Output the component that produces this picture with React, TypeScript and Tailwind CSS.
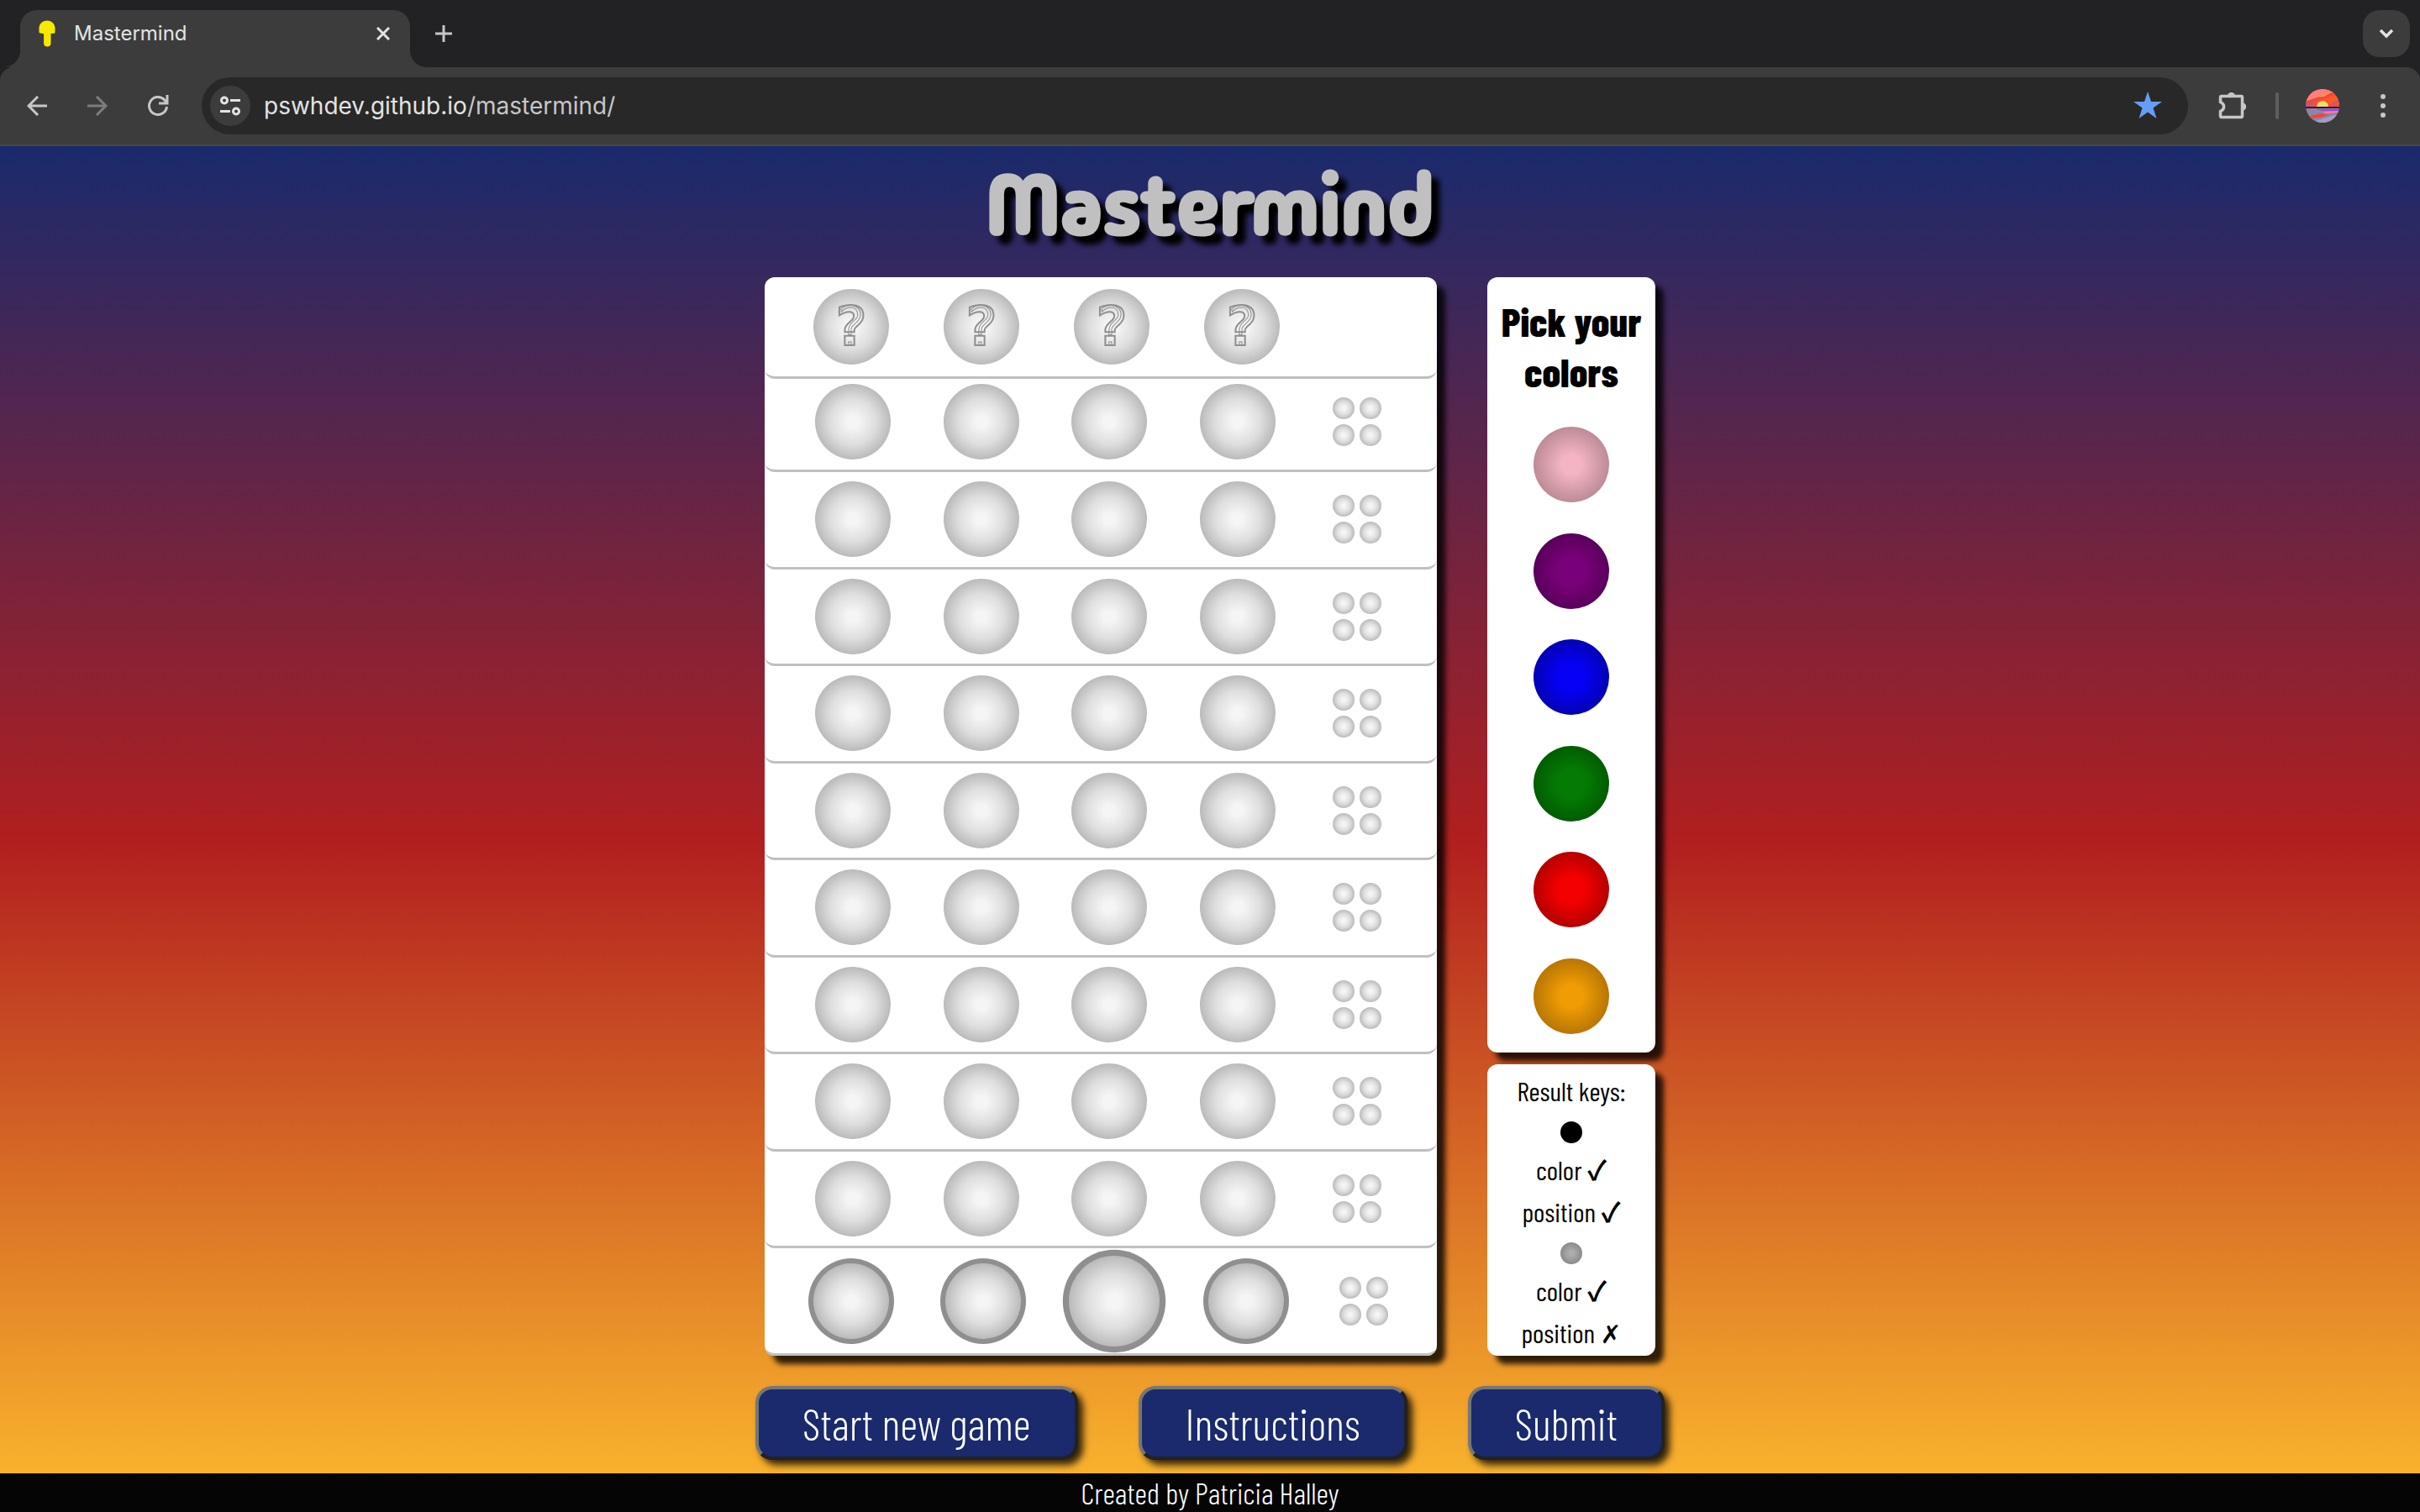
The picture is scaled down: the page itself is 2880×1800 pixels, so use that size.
import type { ReactNode } from "react";

const PEG =
  "rounded-full bg-[radial-gradient(circle_closest-side,#f5f5f5_15%,#dedede_60%,#bababa_100%)]";

const COLORS = [
  { name: "pink", style: "bg-[radial-gradient(circle_closest-side,#f4b4c4_25%,#bd8b96_100%)]" },
  { name: "purple", style: "bg-[radial-gradient(circle_closest-side,#780078_40%,#58005a_100%)]" },
  { name: "blue", style: "bg-[radial-gradient(circle_closest-side,#0600f4_35%,#0402b4_100%)]" },
  { name: "green", style: "bg-[radial-gradient(circle_closest-side,#047c04_35%,#025c02_100%)]" },
  { name: "red", style: "bg-[radial-gradient(circle_closest-side,#f40000_35%,#b40000_100%)]" },
  { name: "orange", style: "bg-[radial-gradient(circle_closest-side,#f09c04_30%,#b87604_100%)]" },
];

function IconButton({ label, className = "", children }: { label: string; className?: string; children: ReactNode }) {
  return (
    <button aria-label={label} className={`flex size-14 shrink-0 items-center justify-center rounded-full ${className}`}>
      {children}
    </button>
  );
}

function TabStrip() {
  return (
    <div className="flex h-20 items-end bg-[#222123] pl-6 pr-3">
      <div className="relative flex h-[68px] w-[464px] items-center rounded-t-[20px] bg-[#3c3c3c] pb-3 pl-[22px] pr-3">
        <svg className="absolute bottom-0 right-full size-5" viewBox="0 0 20 20" aria-hidden="true">
          <path d="M20 0V20H0C11 20 20 11 20 0Z" fill="#3c3c3c" />
        </svg>
        <svg className="absolute bottom-0 left-full size-5" viewBox="0 0 20 20" aria-hidden="true">
          <path d="M0 0V20H20C9 20 0 11 0 0Z" fill="#3c3c3c" />
        </svg>
        <svg className="h-8 w-5" viewBox="0 0 20 32" aria-hidden="true">
          <path
            d="M10 .5c5.500 0 9.500 4 9.500 9v5c0 .8-.5 1.200-1.500 1.300l-3.500.3V27.500c0 2.500-1.700 4-4.200 4s-4.200-1.500-4.200-4V16.200l-4-.6C1 15.400.5 15 .5 14V9.500c0-5 4-9 9.500-9Z"
            fill="#f5e900"
          />
        </svg>
        <span className="ml-[22px] flex-1 text-2xl text-[#e3e3e3]">Mastermind</span>
        <button aria-label="Close tab" className="flex size-10 items-center justify-center">
          <svg className="size-4" viewBox="0 0 16 16" stroke="#e3e3e3" strokeWidth="3">
            <path d="M1 1 15 15M15 1 1 15" />
          </svg>
        </button>
      </div>
      <button aria-label="New tab" className="mb-5 ml-5 flex size-10 items-center justify-center">
        <svg className="size-5" viewBox="0 0 20 20" stroke="#c7c7c7" strokeWidth="3">
          <path d="M10 0V20M0 10H20" />
        </svg>
      </button>
      <button
        aria-label="Search tabs"
        className="mb-3 ml-auto flex size-14 items-center justify-center rounded-[20px] bg-[#3c3c3c]"
      >
        <svg className="size-5" viewBox="0 0 20 20" fill="none" stroke="#e3e3e3" strokeWidth="3.5">
          <path d="M3 6 10 13 17 6" />
        </svg>
      </button>
    </div>
  );
}

function Avatar() {
  return (
    <svg className="size-10" viewBox="0 0 40 40" aria-hidden="true">
      <defs>
        <clipPath id="avatar">
          <circle cx="20" cy="20" r="20" />
        </clipPath>
      </defs>
      <g clipPath="url(#avatar)">
        <rect width="40" height="22" fill="#ff4c38" />
        <path d="M0 0H40V4L0 16Z" fill="#ff7f7d" />
        <path d="M2 14 40 1V4L0 18Z" fill="#f2453c" />
        <path d="M12 10 34 2 22 9Z" fill="#ff9a3c" />
        <path d="M24 12 40 6V18H28Z" fill="#ff5a24" />
        <path d="M0 18 12 15 8 18 0 21ZM30 17 40 13V15L32 19Z" fill="#9a6590" />
        <path d="M13 21a7 7 0 0 1 14 0Z" fill="#f7dc6a" />
        <rect y="21" width="40" height="19" fill="#8b86a6" />
        <rect y="21" width="40" height="2" fill="#2a1248" />
        <path d="M12 24H40V26L20 26Z" fill="#a63df0" />
        <path d="M20 27 40 26V28L24 29Z" fill="#ff7f8d" />
        <path d="M6 32 18 29 28 31 16 34 4 35Z" fill="#f0453c" />
        <path d="M12 38 34 31 40 32V40H12Z" fill="#a79ac4" />
      </g>
    </svg>
  );
}

function Toolbar() {
  return (
    <div className="bg-[#222123]">
      <div className="flex h-[94px] items-center rounded-t-2xl border-b-2 border-[#484848] bg-[#3c3c3c] px-4">
        <IconButton label="Back">
          <svg className="size-6" viewBox="0 0 24 24" fill="none" stroke="#c7c7c7" strokeWidth="3">
            <path d="M24 12H2M13 1 2 12 13 23" />
          </svg>
        </IconButton>
        <IconButton label="Forward" className="ml-4">
          <svg className="size-6" viewBox="0 0 24 24" fill="none" stroke="#7d7d7d" strokeWidth="3">
            <path d="M0 12H22M11 1 22 12 11 23" />
          </svg>
        </IconButton>
        <IconButton label="Reload" className="ml-4">
          <svg className="size-[26px]" viewBox="0 0 26 26" fill="none" stroke="#c7c7c7" strokeWidth="3">
            <path d="M23.500 14A10.500 10.500 0 1 1 20.500 5.600L23 9" />
            <path d="M24 0V10H14" />
          </svg>
        </IconButton>
        <div className="ml-6 flex h-[68px] flex-1 items-center rounded-full bg-[#282828] pl-[10px] pr-5">
          <button
            aria-label="View site information"
            className="flex size-12 items-center justify-center rounded-full bg-[#3c3c3c]"
          >
            <svg className="size-6" viewBox="0 0 24 24" fill="none" stroke="#e3e3e3" strokeWidth="3">
              <circle cx="5" cy="5.500" r="3.500" />
              <path d="M12 5.500H24M0 18.500H12" />
              <circle cx="19" cy="18.500" r="3.500" />
            </svg>
          </button>
          <a href="https://pswhdev.github.io/mastermind/" className="ml-4 flex-1 text-[28px] text-[#e3e3e3]">
            pswhdev.github.io<span className="text-[#c7c7c7]">/mastermind/</span>
          </a>
          <IconButton label="Bookmark">
            <svg className="size-[34px]" viewBox="0 0 34 34" fill="#669df6">
              <path d="M17 0 21 12H34L23.500 19.500 27.500 32 17 24.500 6.500 32 10.500 19.500 0 12H13Z" />
            </svg>
          </IconButton>
        </div>
        <IconButton label="Extensions" className="ml-6">
          <svg className="h-9 w-[34px]" viewBox="-1 1 34 36" fill="none">
            <path
              d="M4 7.500H27Q28.500 7.500 28.500 9V31Q28.500 32.500 27 32.500H4Q2.500 32.500 2.500 31V25.500C8 23 8 17 2.500 14.500V9Q2.500 7.500 4 7.500Z"
              stroke="#c7c7c7"
              strokeWidth="3.500"
            />
            <path d="M11 7C11 1.500 20 1.500 20 7ZM29 15.500C34.500 15.500 34.500 24.500 29 24.500Z" fill="#c7c7c7" />
          </svg>
        </IconButton>
        <span className="ml-6 h-8 w-1 rounded-full bg-[#5e5e5e]" />
        <IconButton label="Profile" className="ml-6">
          <Avatar />
        </IconButton>
        <IconButton label="Menu" className="ml-4">
          <svg className="h-7 w-2" viewBox="0 0 8 28" fill="#c7c7c7">
            <circle cx="4" cy="3" r="3" />
            <circle cx="4" cy="14" r="3" />
            <circle cx="4" cy="25" r="3" />
          </svg>
        </IconButton>
      </div>
    </div>
  );
}

function KeyPegs() {
  return (
    <div className="grid grid-cols-2 gap-1.5 p-1.5">
      {[0, 1, 2, 3].map((n) => (
        <span key={n} className={`size-[26px] ${PEG}`} />
      ))}
    </div>
  );
}

const ROW = "flex items-center rounded-xl border-b-[3px] border-[#c0c0c0]";

function Board() {
  return (
    <section
      aria-label="Board"
      className="flex w-[800px] flex-col rounded-xl bg-white shadow-[10px_10px_6px_rgba(0,0,0,0.8)]"
    >
      <div className={`${ROW} h-[121px] gap-[65px] pl-[58px]`}>
        {[0, 1, 2, 3].map((n) => (
          <div
            key={n}
            className={`grid size-[90px] place-items-center ${PEG} font-['DejaVu_Sans',sans-serif] text-[64px] leading-none font-bold text-transparent [-webkit-text-stroke:2px_#8f8f8f] after:font-extralight after:content-['?'] after:[grid-area:1/1] after:[-webkit-text-stroke:1px_#8f8f8f]`}
          >
            <span className="[grid-area:1/1]">?</span>
          </div>
        ))}
      </div>
      <div className={`${ROW} h-[111px] justify-between px-[60px] pb-1.5`}>
        {[0, 1, 2, 3].map((n) => (
          <span key={n} className={`size-[90px] ${PEG}`} />
        ))}
        <KeyPegs />
      </div>
      {[2, 3, 4, 5, 6, 7, 8, 9].map((row) => (
        <div key={row} className={`${ROW} flex-1 justify-between px-[60px]`}>
          {[0, 1, 2, 3].map((n) => (
            <span key={n} className={`size-[90px] ${PEG}`} />
          ))}
          <KeyPegs />
        </div>
      ))}
      <div className={`${ROW} h-32 justify-between px-[52px]`}>
        {[0, 1, 2, 3].map((n) => (
          <button
            key={n}
            aria-label={`Slot ${n + 1}`}
            className={`size-[102px] rounded-full bg-[#8f8f8f] p-1.5 ${n === 2 ? "scale-120" : ""}`}
          >
            <span className={`block size-full ${PEG}`} />
          </button>
        ))}
        <KeyPegs />
      </div>
    </section>
  );
}

function Tick() {
  return <span className="font-['Noto_Sans_CJK_JP',sans-serif] text-[32px] leading-none font-bold">✓</span>;
}

function SidePanels() {
  return (
    <aside className="flex w-[200px] flex-col gap-3.5">
      <section className="flex flex-1 flex-col items-center rounded-xl bg-white pt-[22px] shadow-[10px_10px_6px_rgba(0,0,0,0.8)]">
        <h2 className="text-center text-5xl leading-[60px] font-extrabold">
          Pick your
          <br />
          colors
        </h2>
        <div className="mt-9 flex flex-1 flex-col justify-between pb-[22px]">
          {COLORS.map((c) => (
            <button key={c.name} aria-label={c.name} className={`size-[90px] rounded-full ${c.style}`} />
          ))}
        </div>
      </section>
      <section className="flex flex-col items-center rounded-xl bg-white pt-1.5 pb-[3px] text-[32px] leading-[50px] shadow-[10px_10px_6px_rgba(0,0,0,0.8)]">
        <h3>Result keys:</h3>
        <span className="mt-3 mb-1.5 size-[26px] rounded-full bg-black" />
        <p className="h-[50px]">
          color <Tick />
        </p>
        <p className="h-[50px]">
          position <Tick />
        </p>
        <span className="mt-3 mb-1.5 size-[26px] rounded-full bg-[radial-gradient(circle_closest-side,#adadad_20%,#8a8a8a_100%)]" />
        <p className="h-[50px]">
          color <Tick />
        </p>
        <p className="h-[50px]">
          position <span className="font-['DejaVu_Sans',sans-serif] text-[30px] leading-none font-bold">✗</span>
        </p>
      </section>
    </aside>
  );
}

function GameButton({ children }: { children: ReactNode }) {
  return (
    <button className="h-[88px] rounded-[20px] border-4 border-t-[#767676] border-l-[#767676] border-r-[#222] border-b-[#222] bg-[#1a2a6c] px-[52px] text-[52px] font-light text-white shadow-[6px_6px_8px_rgba(0,0,0,0.8)]">
      {children}
    </button>
  );
}

export default function App() {
  return (
    <div className="flex min-h-screen flex-col font-[Inter,sans-serif]">
      <header>
        <TabStrip />
        <Toolbar />
      </header>
      <div className="flex flex-1 flex-col bg-linear-to-b/srgb from-[#1a2a6c] via-[#b21f1f] via-51% to-[#fdbb2d] font-['Barlow_Condensed','Roboto_Condensed',sans-serif] text-black">
        <h1 className="pt-1 pb-5 text-center font-['Madimi_One',Fredoka,sans-serif] text-[100px] leading-[132px] font-bold text-[#c0c0c0] [text-shadow:10px_10px_6px_#000]">
          Mastermind
        </h1>
        <main className="flex flex-1 flex-col">
          <div className="flex flex-1 justify-center gap-[60px]">
            <Board />
            <SidePanels />
          </div>
          <div className="flex justify-center gap-[72px] pt-9 pb-4">
            <GameButton>Start new game</GameButton>
            <GameButton>Instructions</GameButton>
            <GameButton>Submit</GameButton>
          </div>
        </main>
        <footer className="flex h-[46px] items-center justify-center bg-[#050505] text-4xl font-light text-white">
          Created by Patricia Halley
        </footer>
      </div>
    </div>
  );
}
